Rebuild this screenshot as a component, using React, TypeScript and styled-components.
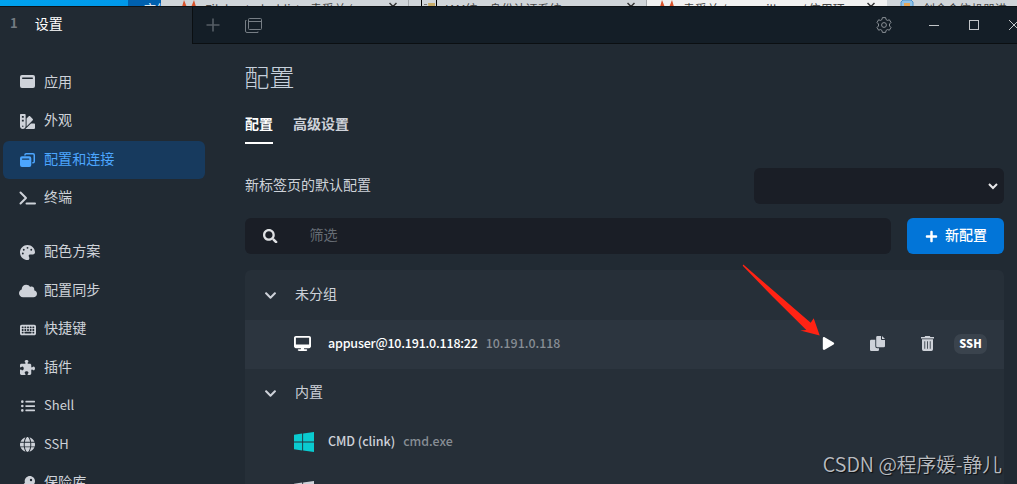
import React, { useState } from "react"
import styled, { createGlobalStyle, css } from "styled-components"
import { FaChevronDown, FaListUl, FaPlay, FaPlus, FaSearch } from "react-icons/fa"
import {
  FaCloud,
  FaDesktop,
  FaGlobe,
  FaKey,
  FaKeyboard,
  FaPalette,
  FaPuzzlePiece,
  FaSwatchbook
} from "react-icons/fa6"

const GlobalStyle = createGlobalStyle`
  * {
    box-sizing: border-box;
  }

  body {
    margin: 0;
    background: #212a33;
    color: #ced2d9;
    font-family: "Noto Sans CJK SC", sans-serif;
    font-size: 14px;
    line-height: 20px;
    overflow: hidden;
  }

  svg {
    display: block;
    flex: none;
  }
`

const Screen = styled.div`
  position: relative;
  width: 1017px;
  height: 484px;
  overflow: hidden;
`

/* browser tabs showing behind the window */

const Backdrop = styled.div`
  display: flex;
  height: 6px;
  overflow: hidden;
  background: #d0d5d9;
`

const Desktop = styled.div`
  flex: none;
  width: 128px;
  background: linear-gradient(90deg, #00a2ee, #0098ea);
`

const DesktopLabel = styled.div`
  flex: none;
  width: 33px;
  height: 18px;
  padding-left: 16px;
  overflow: hidden;
  background: #0060ae;
  color: #fff;
  font-size: 12px;
  line-height: 18px;
  white-space: nowrap;
`

const BrowserTab = styled.div<{ $width: number; $indent?: number; $active?: boolean }>`
  display: flex;
  flex: none;
  width: ${({ $width }) => $width}px;
  height: 18px;
  padding: 0 11px 0 ${({ $indent = 12 }) => $indent}px;
  gap: 8px;
  border-right: 1px solid ${({ $active }) => ($active ? "#f1f1f1" : "#a5a9ac")};
  background: ${({ $active }) => ($active ? "#f1f1f1" : "#d0d5d9")};
  color: #444;
  font-size: 12px;
  line-height: 18px;
  white-space: nowrap;
`

const BrowserTitle = styled.span`
  flex: 1;
  overflow: hidden;
`

/* window */

const Window = styled.div`
  display: flex;
  flex-direction: column;
  width: 1034px;
  height: 478px;
  border-top: 1px solid #0d1216;
`

const TabBar = styled.div`
  display: flex;
  height: 37px;
  flex: none;
`

const WindowTab = styled.div`
  display: flex;
  align-items: center;
  width: 192px;
  padding: 0 0 5px 10px;
  gap: 17px;
  color: #fff;
`

const TabIndex = styled.span`
  color: #747b82;
  font-size: 13px;
  font-weight: 700;
`

const TabTools = styled.div`
  display: flex;
  flex: 1;
  align-items: center;
  border-left: 1px solid #0b0f12;
  border-bottom: 1px solid #0b0f12;
  background: #141e27;
  color: #777e85;
`

const ToolButton = styled.div`
  display: flex;
  align-items: center;
  justify-content: center;
  width: 40px;
  height: 36px;
`

const SettingsButton = styled(ToolButton)`
  margin: 0 10px 0 auto;
`

const WindowButton = styled(ToolButton)`
  color: #c2c5c8;
`

const Settings = styled.div`
  display: flex;
  flex: 1;
  min-height: 0;
  overflow: hidden;
`

const Sidebar = styled.nav`
  flex: none;
  width: 205px;
  padding: 20px 0 0 3px;
`

const NavGroup = styled.div`
  margin-bottom: 16px;
`

const NavItem = styled.div<{ $active?: boolean }>`
  display: flex;
  align-items: center;
  height: 38.4px;
  padding: 0 15px;
  gap: 7px;
  border-radius: 6px;
  cursor: pointer;

  ${({ $active }) =>
    $active &&
    css`
      background: #173a5e;
      color: #4ca6ff;
    `}
`

const NavIcon = styled.span`
  display: flex;
  justify-content: center;
  width: 19px;
`

const NavLabel = styled.span<{ $latin?: boolean }>`
  padding-bottom: ${({ $latin }) => ($latin ? 2 : 4.6)}px;
  font-size: ${({ $latin }) => ($latin ? 13 : 14.1)}px;
`

const Content = styled.main`
  width: 799px;
  padding: 15px 0 0 40px;
`

const Title = styled.h3`
  margin: 0 0 0 -1px;
  color: #c6d0dc;
  font-size: 25.3px;
  font-weight: 300;
  line-height: 34px;
`

const Tabs = styled.div`
  display: flex;
  gap: 20px;
  margin-top: 20px;
`

const Tab = styled.div<{ $active: boolean }>`
  height: 31px;
  border-bottom: 2px solid ${({ $active }) => ($active ? "#fff" : "transparent")};
  color: ${({ $active }) => ($active ? "#fff" : "#ced2d9")};
  font-weight: 700;
  cursor: pointer;
`

const FormLine = styled.div`
  display: flex;
  align-items: center;
  justify-content: space-between;
  margin-top: 24px;
`

const Label = styled.label`
  padding-bottom: 4px;
`

const Select = styled.div`
  display: flex;
  align-items: center;
  justify-content: flex-end;
  width: 250px;
  height: 36px;
  padding-right: 6px;
  border-radius: 6px;
  background: #1a1e26;
`

const Toolbar = styled.div`
  display: flex;
  gap: 16px;
  margin-top: 14px;
`

const Filter = styled.div`
  display: flex;
  flex: 1;
  align-items: center;
  height: 36px;
  padding-left: 18px;
  gap: 32px;
  border-radius: 6px;
  background: #1a1e26;
  color: #dfe1e4;
`

const Placeholder = styled.span`
  padding-bottom: 4px;
  color: #666c74;
`

const NewButton = styled.button`
  display: flex;
  align-items: center;
  justify-content: center;
  width: 97px;
  height: 36px;
  padding: 0 0 0 1px;
  gap: 7px;
  border: 0;
  border-radius: 6px;
  background: #0275d8;
  color: #fff;
  font: inherit;
  font-weight: 500;
`

const ButtonText = styled.span`
  padding-bottom: 4px;
`

const List = styled.div`
  margin-top: 16px;
  border-radius: 6px 6px 0 0;
  background: #262f38;
`

const GroupRow = styled.div<{ $height: number }>`
  display: flex;
  align-items: center;
  height: ${({ $height }) => $height}px;
  padding-left: 19px;
  gap: 18px;
`

const GroupName = styled.span`
  padding-bottom: 5px;
`

const ProfileRow = styled.div<{ $active?: boolean }>`
  display: flex;
  align-items: center;
  height: 49px;
  padding: 0 17px 2px 49px;
  background: ${({ $active }) => ($active ? "#2c353f" : "transparent")};
  color: ${({ $active }) => ($active ? "#fff" : "#ced2d9")};
`

const ProfileIcon = styled.span`
  width: 34px;
`

const ProfileName = styled.span<{ $strong?: boolean }>`
  margin-right: 8px;
  padding-bottom: 2px;
  font-size: 12.5px;
  font-weight: 500;
  letter-spacing: ${({ $strong }) => ($strong ? -0.2 : -0.05)}px;
`

const ProfileHint = styled.span`
  flex: 1;
  padding-bottom: 2px;
  color: #878d94;
  font-size: 12.4px;
  font-weight: 500;
`

const RowAction = styled.span<{ $bright?: boolean }>`
  display: flex;
  justify-content: center;
  width: 49.5px;
  color: ${({ $bright }) => ($bright ? "#fff" : "#ced2d9")};
`

const Badge = styled.span`
  width: 33px;
  height: 20px;
  margin-left: 2px;
  border-radius: 7px;
  background: #3a434d;
  color: #fff;
  font-size: 11px;
  font-weight: 900;
  line-height: 18px;
  text-align: center;
`

/* annotation and watermark lie over the window */

const Arrow = styled.svg`
  position: absolute;
  left: 740px;
  top: 262px;
`

const Watermark = styled.div`
  position: absolute;
  right: 15px;
  bottom: 5px;
  color: #b9bcc0;
  font-size: 19.7px;
  font-weight: 350;
  line-height: 30px;
  text-shadow: 1px 1px 1px #0a0d10;
  white-space: nowrap;
`

const Fox = () => (
  <svg width="16" height="16" viewBox="0 0 16 16">
    <path d="M3 0l2.400 6h5.200L13 0l2.500 8.500L8 15 .5 8.500z" fill="#d9532c" />
  </svg>
)

const Sheet = () => (
  <svg width="16" height="16" viewBox="0 0 16 16">
    <path d="M.5 0v16M15.500 0v16" stroke="#000" />
    <path d="M3 4h3v1H3zM6 6h2v5H6z" fill="#777" />
    <path d="M7 3h7v9H8z" fill="#c9ad69" />
  </svg>
)

const Robot = () => (
  <svg width="16" height="16" viewBox="0 0 16 16">
    <path d="M2 8V2l2-2h8l2 2v6z" fill="#8fc2e8" stroke="#4d92cc" />
    <path d="M5 3h6v6H5z" fill="#e6a85a" />
  </svg>
)

const Cross = () => (
  <svg width="8" height="16" viewBox="0 0 8 16">
    <path d="M.5 3l7 7M7.500 3l-7 7" stroke="#333" strokeWidth="1.5" />
  </svg>
)

const AppWindow = () => (
  <svg width="15" height="16" viewBox="0 0 15 16">
    <path
      fillRule="evenodd"
      d="M2 0h11a2 2 0 012 2v9a2 2 0 01-2 2H2a2 2 0 01-2-2V2a2 2 0 012-2zM2.700 2.500a.6.6 0 000 1.400h9.600a.6.6 0 000-1.400z"
      fill="currentColor"
    />
  </svg>
)

const WindowStack = () => (
  <svg width="15" height="14" viewBox="0 0 15 14" fill="currentColor">
    <path d="M4.200 2.500V2a2 2 0 012-2H13a2 2 0 012 2v6.500a2 2 0 01-2 2h-.7V9H13a.5.5 0 00.5-.5V2a.5.5 0 00-.5-.5H6.200a.5.5 0 00-.5.5v.5z" />
    <path
      fillRule="evenodd"
      d="M2 3.300h7.300a2 2 0 012 2V12a2 2 0 01-2 2H2a2 2 0 01-2-2V5.300a2 2 0 012-2zM2.500 5.400a.6.6 0 000 1.300h6.300a.6.6 0 000-1.300z"
    />
  </svg>
)

const Prompt = () => (
  <svg width="17" height="14" viewBox="0 0 17 14" fill="none" stroke="currentColor" strokeWidth="2">
    <path d="M1.500 1.500L7 7l-5.500 5.500M7.500 12.500H16" strokeLinecap="round" strokeLinejoin="round" />
  </svg>
)

const Copy = () => (
  <svg width="15" height="15" viewBox="0 0 15 15" fill="currentColor">
    <path d="M7.500 0H11v3.200a.8.8 0 00.8.8H15v6a1.300 1.300 0 01-1.300 1.300H7.500A1.300 1.300 0 016.200 10V1.300A1.300 1.300 0 017.500 0z" />
    <path d="M12 0l3 3h-3z" />
    <path d="M1.300 3.700h4v6.500a2 2 0 002 2H9v1.500A1.300 1.300 0 017.700 15H1.300A1.300 1.300 0 010 13.700V5a1.300 1.300 0 011.300-1.300z" />
  </svg>
)

const Trash = () => (
  <svg width="13" height="15" viewBox="0 0 13 15" fill="currentColor">
    <path d="M4.200 0h4.600l.6 1H13v1.600H0V1h3.600z" />
    <path
      fillRule="evenodd"
      d="M1 3.300h11v10a1.600 1.600 0 01-1.600 1.600H2.600A1.600 1.600 0 011 13.300zM3.400 5.300v7.400h.8V5.300zM6.100 5.300v7.400h.8V5.300zM8.800 5.300v7.400h.8V5.300z"
    />
  </svg>
)

const WindowsLogo = ({ color }: { color: string }) => (
  <svg width="20" height="20" viewBox="0 0 20 20" fill={color}>
    <path d="M0 2.800L8.200 1.600V9.500H0zM9.100 1.500L20 0v9.500H9.100zM0 10.500h8.200v7.900L0 17.200zM9.100 10.500H20V20L9.100 18.500z" />
  </svg>
)

interface NavEntry {
  label: string
  icon: React.ReactNode
  latin?: boolean
}

const navGroups: NavEntry[][] = [
  [
    { label: "应用", icon: <AppWindow /> },
    { label: "外观", icon: <FaSwatchbook size={15} /> },
    { label: "配置和连接", icon: <WindowStack /> },
    { label: "终端", icon: <Prompt /> }
  ],
  [
    { label: "配色方案", icon: <FaPalette size={15} /> },
    { label: "配置同步", icon: <FaCloud size={18} /> },
    { label: "快捷键", icon: <FaKeyboard size={16} /> },
    { label: "插件", icon: <FaPuzzlePiece size={15} /> },
    { label: "Shell", icon: <FaListUl size={14} />, latin: true },
    { label: "SSH", icon: <FaGlobe size={15} />, latin: true },
    { label: "保险库", icon: <FaKey size={15} /> }
  ]
]

const App: React.FC = () => {
  const [page, setPage] = useState("配置和连接")
  const [tab, setTab] = useState("配置")

  return (
    <Screen>
      <GlobalStyle />
      <Backdrop>
        <Desktop />
        <DesktopLabel>文件</DesktopLabel>
        <BrowserTab $width={248} $indent={20}>
          <Fox />
          <BrowserTitle>Filebeat_dashlist - 袁受益 (</BrowserTitle>
          <Cross />
        </BrowserTab>
        <BrowserTab $width={238}>
          <Sheet />
          <BrowserTitle>IAM统一身份认证系统</BrowserTitle>
          <Cross />
        </BrowserTab>
        <BrowserTab $width={240} $active>
          <Fox />
          <BrowserTitle>袁受益 / nacos-ilbum / 信用环</BrowserTitle>
          <Cross />
        </BrowserTab>
        <BrowserTab $width={240}>
          <Robot />
          <BrowserTitle>创金合信机器进</BrowserTitle>
        </BrowserTab>
      </Backdrop>

      <Window>
        <TabBar>
          <WindowTab>
            <TabIndex>1</TabIndex>
            设置
          </WindowTab>
          <TabTools>
            <ToolButton>
              <svg width="14" height="14" viewBox="0 0 14 14" stroke="#565e66" strokeWidth="1.6">
                <path d="M7 .5v13M.5 7h13" />
              </svg>
            </ToolButton>
            <ToolButton>
              <svg width="17" height="15" viewBox="0 0 17 15" fill="none" stroke="currentColor">
                <rect x="3.5" y=".5" width="13" height="11" rx="1" />
                <path d="M3.500 3.500h13M1.500 2.500h-1v10.500q0 1.500 1.500 1.500h11v-1" />
              </svg>
            </ToolButton>
            <SettingsButton>
              <svg width="16" height="16" viewBox="0 0 16 16" fill="none" stroke="#8b9197">
                <path
                  d="M6.400.600h3.200l.5 2 1.300.8 2-.6 1.600 2.700-1.500 1.500v2l1.500 1.500-1.600 2.700-2-.6-1.300.8-.5 2H6.400l-.5-2-1.300-.8-2 .6L1 10.500 2.500 9V7L1 5.500l1.600-2.700 2 .6 1.300-.8z"
                  strokeLinejoin="round"
                />
                <circle cx="8" cy="8" r="2.400" />
              </svg>
            </SettingsButton>
            <WindowButton>
              <svg width="10" height="10" viewBox="0 0 10 10" stroke="currentColor">
                <path d="M0 5.500h10" />
              </svg>
            </WindowButton>
            <WindowButton>
              <svg width="10" height="10" viewBox="0 0 10 10" fill="none" stroke="currentColor">
                <rect x=".5" y=".5" width="9" height="9" />
              </svg>
            </WindowButton>
            <WindowButton>
              <svg width="10" height="10" viewBox="0 0 10 10" stroke="currentColor">
                <path d="M0 0l10 10M10 0L0 10" />
              </svg>
            </WindowButton>
          </TabTools>
        </TabBar>

        <Settings>
          <Sidebar>
            {navGroups.map((group, index) => (
              <NavGroup key={index}>
                {group.map(({ label, icon, latin }) => (
                  <NavItem key={label} $active={label === page} onClick={() => setPage(label)}>
                    <NavIcon>{icon}</NavIcon>
                    <NavLabel $latin={latin}>{label}</NavLabel>
                  </NavItem>
                ))}
              </NavGroup>
            ))}
          </Sidebar>

          <Content>
            <Title>配置</Title>
            <Tabs>
              {["配置", "高级设置"].map(name => (
                <Tab key={name} $active={name === tab} onClick={() => setTab(name)}>
                  {name}
                </Tab>
              ))}
            </Tabs>

            <FormLine>
              <Label>新标签页的默认配置</Label>
              <Select>
                <svg width="10" height="7" viewBox="0 0 10 7" fill="none" stroke="#e8e8ea" strokeWidth="2">
                  <path d="M1 1l4 4 4-4" />
                </svg>
              </Select>
            </FormLine>

            <Toolbar>
              <Filter>
                <FaSearch size={14.5} />
                <Placeholder>筛选</Placeholder>
              </Filter>
              <NewButton>
                <FaPlus size={13} />
                <ButtonText>新配置</ButtonText>
              </NewButton>
            </Toolbar>

            <List>
              <GroupRow $height={50}>
                <FaChevronDown size={13} />
                <GroupName>未分组</GroupName>
              </GroupRow>
              <ProfileRow $active>
                <ProfileIcon>
                  <FaDesktop size={17} />
                </ProfileIcon>
                <ProfileName $strong>appuser@10.191.0.118:22</ProfileName>
                <ProfileHint>10.191.0.118</ProfileHint>
                <RowAction $bright>
                  <FaPlay size={13} />
                </RowAction>
                <RowAction>
                  <Copy />
                </RowAction>
                <RowAction>
                  <Trash />
                </RowAction>
                <Badge>SSH</Badge>
              </ProfileRow>
              <GroupRow $height={49}>
                <FaChevronDown size={13} />
                <GroupName>内置</GroupName>
              </GroupRow>
              <ProfileRow>
                <ProfileIcon>
                  <WindowsLogo color="#0acbd0" />
                </ProfileIcon>
                <ProfileName>CMD (clink)</ProfileName>
                <ProfileHint>cmd.exe</ProfileHint>
              </ProfileRow>
              <ProfileRow>
                <ProfileIcon>
                  <WindowsLogo color="#ced2d9" />
                </ProfileIcon>
              </ProfileRow>
            </List>
          </Content>
        </Settings>
      </Window>

      <Arrow width="84" height="78" viewBox="740 262 84 78">
        <path
          d="M743.300 264.600L810.700 322.700 813.700 318.300 819.700 335.500 800.300 330.600 806.300 330 773 297 742.700 265.800z"
          fill="#ff2314"
        />
      </Arrow>
      <Watermark>CSDN @程序媛-静儿</Watermark>
    </Screen>
  )
}

export default App
